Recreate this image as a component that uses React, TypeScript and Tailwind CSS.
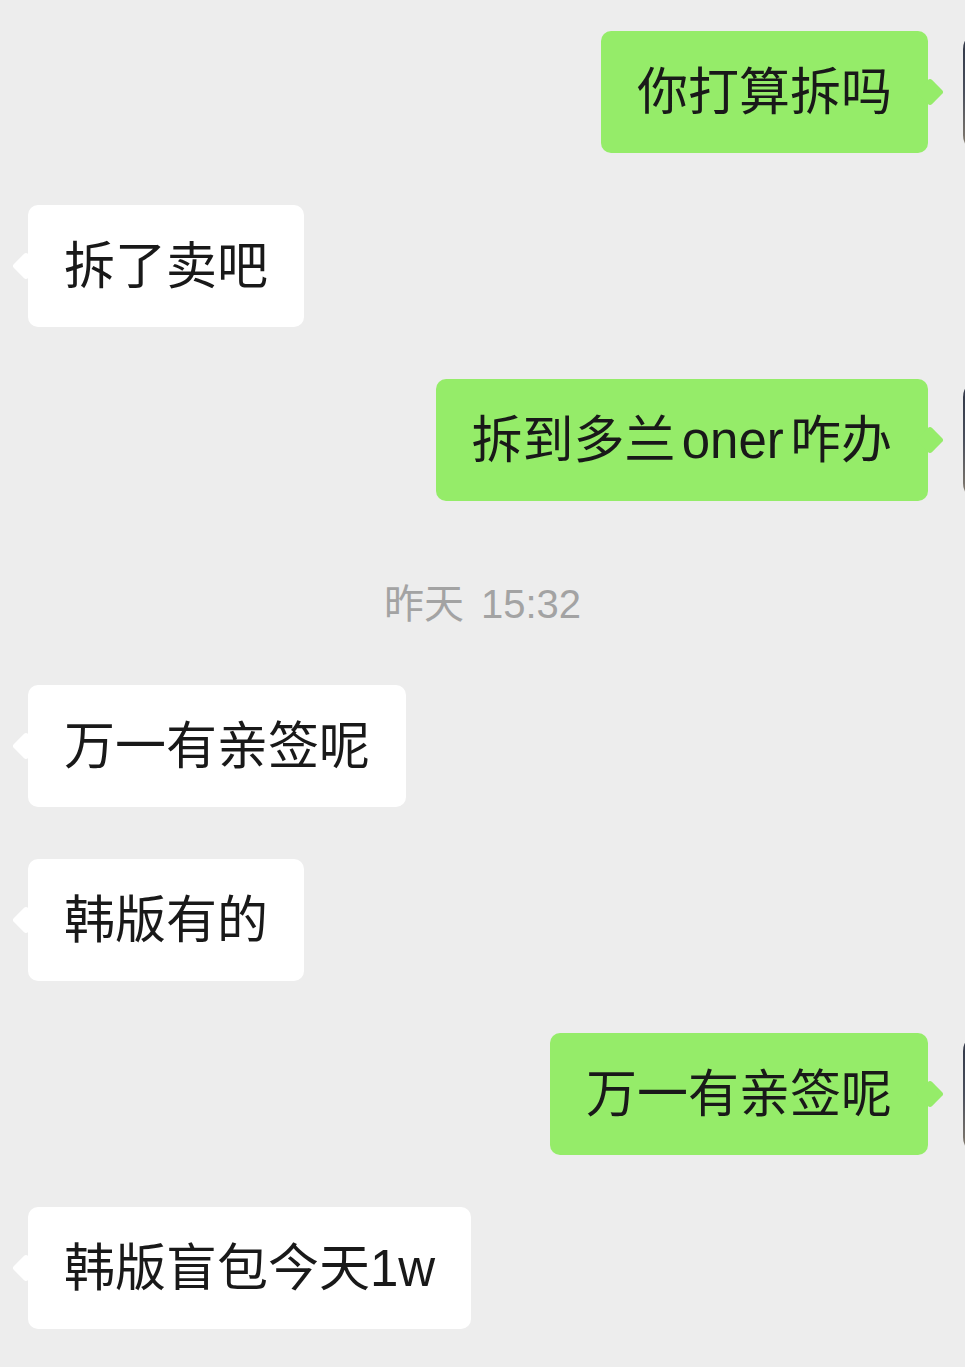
const font = { fontFamily: '"Liberation Sans", "Noto Sans CJK SC", sans-serif' };

type Msg = { side: 'left' | 'right' | 'time'; text: string };

const messages: Msg[] = [
  { side: 'right', text: '你打算拆吗' },
  { side: 'left', text: '拆了卖吧' },
  { side: 'right', text: '拆到多兰 oner 咋办' },
  { side: 'time', text: '昨天 15:32' },
  { side: 'left', text: '万一有亲签呢' },
  { side: 'left', text: '韩版有的' },
  { side: 'right', text: '万一有亲签呢' },
  { side: 'left', text: '韩版盲包今天1w' },
];

function Bubble({ text, mine }: { text: string; mine: boolean }) {
  return (
    <div
      className={`relative h-[122px] flex items-center px-[36px] rounded-[10px] text-[51px] leading-none text-[#191919] whitespace-nowrap [word-spacing:-8px] ${
        mine ? 'bg-[#95ec69]' : 'bg-white'
      }`}
    >
      {mine ? (
        <span className="absolute right-[-12px] top-[51px] w-[20px] h-[20px] rotate-45 rounded-[3px] bg-[#95ec69]" />
      ) : (
        <span className="absolute left-[-12px] top-[51px] w-[20px] h-[20px] rotate-45 rounded-[3px] bg-white" />
      )}
      <span className="relative">{text}</span>
    </div>
  );
}

export default function App() {
  return (
    <div className="min-h-screen w-full overflow-hidden bg-[#ededed] pt-[31px] pb-[38px] flex flex-col gap-[52px]" style={font}>
      {messages.map((m, i) => {
        if (m.side === 'time') {
          return (
            <div key={i} className="h-[80px] flex items-center justify-center pt-[22px] text-[40px] text-[#a3a3a3] leading-none [word-spacing:6px]">
              {m.text}
            </div>
          );
        }
        if (m.side === 'right') {
          return (
            <div key={i} className="flex justify-end items-start">
              <Bubble text={m.text} mine />
              <div className="ml-[35px] mr-[-120px] w-[122px] h-[122px] shrink-0 rounded-[18px] bg-gradient-to-b from-[#2e3444] via-[#4a4f5c] to-[#8a8070]" />
            </div>
          );
        }
        return (
          <div key={i} className="flex justify-start pl-[28px]">
            <Bubble text={m.text} mine={false} />
          </div>
        );
      })}
    </div>
  );
}
